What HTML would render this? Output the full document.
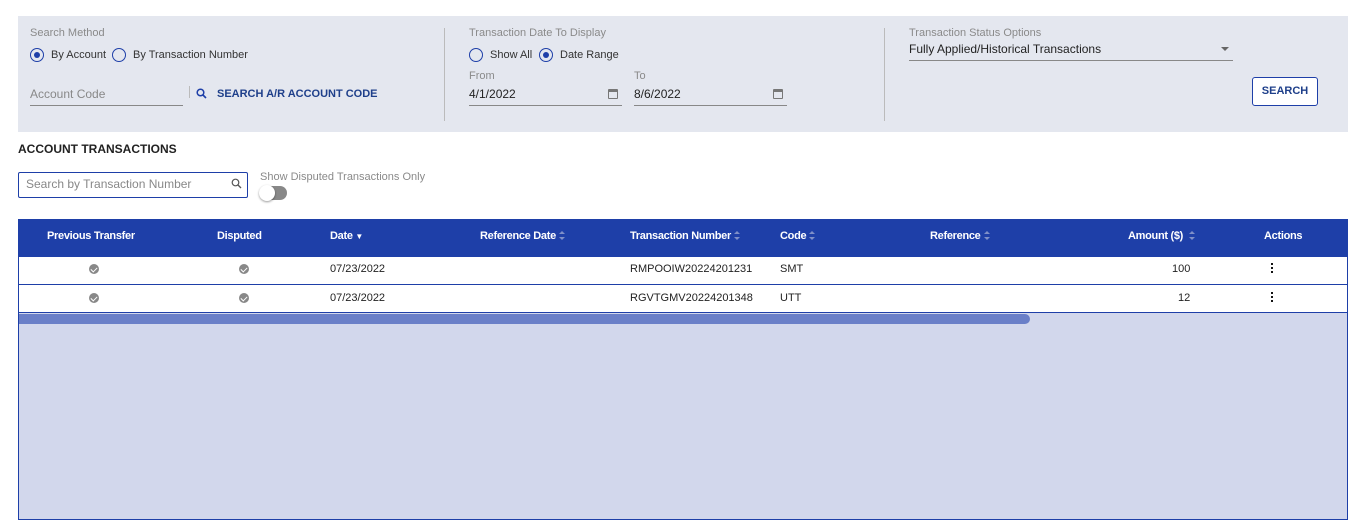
<!DOCTYPE html>
<html><head><meta charset="utf-8"><style>
*{box-sizing:border-box;margin:0;padding:0}
body{width:1366px;height:523px;background:#fff;font-family:"Liberation Sans",sans-serif;position:relative;overflow:hidden;color:#222}
.a{position:absolute;white-space:nowrap}
.lbl{font-size:11px;color:#8a8a8a}
.t{font-size:11px;color:#333}
.radio{position:absolute;width:14px;height:14px;border:1.5px solid #1e3fa8;border-radius:50%}
.radio.on::after{content:"";position:absolute;left:2.5px;top:2.5px;width:6px;height:6px;border-radius:50%;background:#1e3fa8}
.line{position:absolute;height:1px;background:#888}
.vsep{position:absolute;width:1px;background:#bbb}
.th{position:absolute;top:230px;font-size:11px;font-weight:bold;color:#fff;white-space:nowrap;letter-spacing:-0.3px}
.td{position:absolute;font-size:11px;color:#222;white-space:nowrap}
.chk{position:absolute;width:10px;height:10px;border-radius:50%;background:#888}
.chk::after{content:"";position:absolute;left:3px;top:2px;width:3px;height:5px;border:solid #fff;border-width:0 1.5px 1.5px 0;transform:rotate(45deg)}
.sort{display:inline-block;position:relative;width:7px;height:9px;margin-left:3px;vertical-align:-1px}
.sort::before,.sort::after{content:"";position:absolute;left:0;border-left:3.5px solid transparent;border-right:3.5px solid transparent}
.sort::before{top:0;border-bottom:3.5px solid #7f8fc8}
.sort::after{bottom:0;border-top:3.5px solid #7f8fc8}
.dots{position:absolute;width:2px;height:12px;background:radial-gradient(circle,#000 1px,transparent 1.2px) 0 0/2px 4px repeat-y}
.cal{position:absolute;width:10px;height:10px;border:1px solid #777;border-top-width:3px;border-radius:1px}
</style></head><body>
<div class="a" style="left:18px;top:16px;width:1330px;height:116px;background:#e4e7ef"></div>
<div class="a lbl" style="left:30px;top:27px">Search Method</div>
<div class="radio on" style="left:30px;top:48px"></div>
<div class="a t" style="left:51px;top:49px">By Account</div>
<div class="radio" style="left:112px;top:48px"></div>
<div class="a t" style="left:133px;top:49px">By Transaction Number</div>
<div class="a" style="left:30px;top:87px;font-size:12px;color:#888">Account Code</div>
<div class="line" style="left:30px;top:105px;width:153px"></div>
<div class="vsep" style="left:189px;top:86px;height:12px"></div>
<svg class="a" style="left:196px;top:88px" width="11" height="11" viewBox="0 0 11 11"><circle cx="4.5" cy="4.5" r="3.3" fill="none" stroke="#1e3fa8" stroke-width="1.5"/><path d="M7 7l3 3" stroke="#1e3fa8" stroke-width="1.6"/></svg>
<div class="a" style="left:217px;top:88px;font-size:11px;font-weight:bold;color:#1e3f8a">SEARCH A/R ACCOUNT CODE</div>
<div class="vsep" style="left:444px;top:28px;height:93px"></div>
<div class="a lbl" style="left:469px;top:27px">Transaction Date To Display</div>
<div class="radio" style="left:469px;top:48px"></div>
<div class="a t" style="left:490px;top:49px">Show All</div>
<div class="radio on" style="left:539px;top:48px"></div>
<div class="a t" style="left:560px;top:49px">Date Range</div>
<div class="a lbl" style="left:469px;top:70px">From</div>
<div class="a" style="left:469px;top:87px;font-size:12px;color:#222">4/1/2022</div>
<div class="cal" style="left:608px;top:89px"></div>
<div class="line" style="left:469px;top:105px;width:153px"></div>
<div class="a lbl" style="left:634px;top:70px">To</div>
<div class="a" style="left:634px;top:87px;font-size:12px;color:#222">8/6/2022</div>
<div class="cal" style="left:773px;top:89px"></div>
<div class="line" style="left:634px;top:105px;width:153px"></div>
<div class="vsep" style="left:884px;top:28px;height:93px"></div>
<div class="a lbl" style="left:909px;top:27px">Transaction Status Options</div>
<div class="a" style="left:909px;top:42px;font-size:12px;color:#222">Fully Applied/Historical Transactions</div>
<div class="a" style="left:1221px;top:47px;width:0;height:0;border-left:4px solid transparent;border-right:4px solid transparent;border-top:4px solid #666"></div>
<div class="line" style="left:909px;top:60px;width:324px"></div>
<div class="a" style="left:1252px;top:77px;width:66px;height:29px;border:1px solid #1e3fa8;border-radius:3px;background:#fff;font-size:11px;font-weight:bold;color:#1e3f8a;text-align:center;line-height:27px">SEARCH</div>

<div class="a" style="left:18px;top:142px;font-size:12px;font-weight:bold;color:#222">ACCOUNT TRANSACTIONS</div>
<div class="a" style="left:18px;top:172px;width:230px;height:26px;border:1px solid #1e3fa8;border-radius:2px;background:#fff"></div>
<div class="a" style="left:26px;top:177px;font-size:12px;color:#888">Search by Transaction Number</div>
<svg class="a" style="left:231px;top:178px" width="11" height="11" viewBox="0 0 11 11"><circle cx="4.5" cy="4.5" r="3.3" fill="none" stroke="#555" stroke-width="1.2"/><path d="M7 7l3 3" stroke="#555" stroke-width="1.3"/></svg>
<div class="a lbl" style="left:260px;top:171px">Show Disputed Transactions Only</div>
<div class="a" style="left:260px;top:186px;width:27px;height:14px;border-radius:7px;background:#888"></div>
<div class="a" style="left:259px;top:185px;width:16px;height:16px;border-radius:50%;background:#fff;box-shadow:0 1px 2px rgba(0,0,0,.4)"></div>

<div class="a" style="left:18px;top:219px;width:1330px;height:301px;border:1px solid #1e3fa8;background:#d2d7ec"></div>
<div class="a" style="left:18px;top:219px;width:1330px;height:38px;background:#1e3fa8"></div>
<div class="a" style="left:19px;top:257px;width:1328px;height:56px;background:#fff"></div>
<div class="a" style="left:19px;top:284px;width:1328px;height:1px;background:#1e3fa8"></div>
<div class="a" style="left:19px;top:312px;width:1328px;height:1px;background:#1e3fa8"></div>
<div class="a" style="left:19px;top:314px;width:1011px;height:10px;border-radius:0 5px 5px 0;background:#6a7fc8"></div>

<div class="th" style="left:47px">Previous Transfer</div>
<div class="th" style="left:217px">Disputed</div>
<div class="th" style="left:330px">Date <span style="font-size:8px">&#9660;</span></div>
<div class="th" style="left:480px">Reference Date<span class="sort"></span></div>
<div class="th" style="left:630px">Transaction Number<span class="sort"></span></div>
<div class="th" style="left:780px">Code<span class="sort"></span></div>
<div class="th" style="left:930px">Reference<span class="sort"></span></div>
<div class="th" style="left:1128px">Amount ($) <span class="sort"></span></div>
<div class="th" style="left:1264px">Actions</div>

<div class="chk" style="left:89px;top:264px"></div><div class="chk" style="left:239px;top:264px"></div>
<div class="td" style="left:330px;top:263px">07/23/2022</div>
<div class="td" style="left:630px;top:263px">RMPOOIW20224201231</div>
<div class="td" style="left:780px;top:263px">SMT</div>
<div class="td" style="left:1172px;top:263px">100</div>
<div class="dots" style="left:1271px;top:262px"></div>

<div class="chk" style="left:89px;top:293px"></div><div class="chk" style="left:239px;top:293px"></div>
<div class="td" style="left:330px;top:292px">07/23/2022</div>
<div class="td" style="left:630px;top:292px">RGVTGMV20224201348</div>
<div class="td" style="left:780px;top:292px">UTT</div>
<div class="td" style="left:1178px;top:292px">12</div>
<div class="dots" style="left:1271px;top:291px"></div>
</body></html>
